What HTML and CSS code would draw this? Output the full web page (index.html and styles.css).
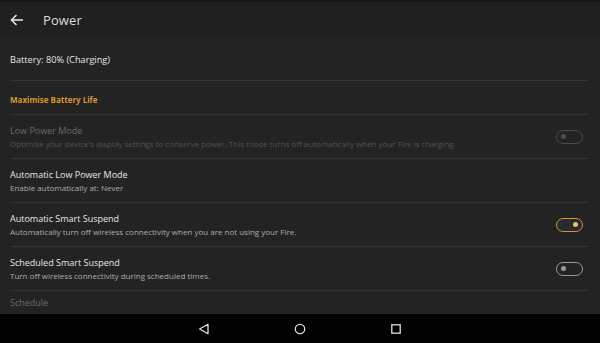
FILE: index.html
```html
<!DOCTYPE html>
<html>
<head>
<meta charset="utf-8">
<link rel="stylesheet" href="styles.css">
</head>
<body>
<div class="screen">
  <header class="appbar">
    <svg class="back" width="14" height="12" viewBox="0 0 14 12"><path d="M13 6H1.5M6.5 1L1.5 6l5 5" fill="none" stroke="#e8e8e8" stroke-width="1.5"/></svg>
    <span class="title">Power</span>
  </header>
  <main class="content">
    <div class="row battery"><span class="t">Battery: 80% (Charging)</span></div>
    <div class="row section"><span class="sec">Maximise Battery Life</span></div>
    <div class="row item disabled">
      <div class="texts"><div class="t">Low Power Mode</div><div class="s">Optimise your device's display settings to conserve power. This mode turns off automatically when your Fire is charging.</div></div>
      <span class="toggle off dim"><span class="knob"></span></span>
    </div>
    <div class="row item">
      <div class="texts"><div class="t">Automatic Low Power Mode</div><div class="s">Enable automatically at: Never</div></div>
    </div>
    <div class="row item">
      <div class="texts"><div class="t">Automatic Smart Suspend</div><div class="s">Automatically turn off wireless connectivity when you are not using your Fire.</div></div>
      <span class="toggle on"><span class="knob"></span></span>
    </div>
    <div class="row item">
      <div class="texts"><div class="t">Scheduled Smart Suspend</div><div class="s">Turn off wireless connectivity during scheduled times.</div></div>
      <span class="toggle off"><span class="knob"></span></span>
    </div>
    <div class="row last disabled"><span class="t">Schedule</span></div>
  </main>
  <nav class="navbar">
    <svg width="12" height="12" viewBox="0 0 12 12"><path d="M10 1.2V10.8L1.6 6Z" fill="none" stroke="#e0e0e0" stroke-width="1.3" stroke-linejoin="round"/></svg>
    <svg width="12" height="12" viewBox="0 0 12 12"><circle cx="6" cy="6" r="4.7" fill="none" stroke="#e0e0e0" stroke-width="1.3"/></svg>
    <svg width="12" height="12" viewBox="0 0 12 12"><rect x="1.8" y="1.8" width="8.4" height="8.4" fill="none" stroke="#e0e0e0" stroke-width="1.3"/></svg>
  </nav>
</div>
</body>
</html>
```
FILE: styles.css
```css
html, body { margin: 0; padding: 0; }
body { width: 600px; height: 343px; overflow: hidden; background: #232323; font-family: "Open Sans", "Noto Sans", sans-serif; }
.screen { display: flex; flex-direction: column; height: 343px; }
.appbar { height: 36px; border-top: 2px solid #161616; background: #202020; display: flex; align-items: center; padding-left: 10px; gap: 19px; }
.back { display: block; }
.title { color: #dcdcdc; font-size: 13px; letter-spacing: 0.1px; margin-top: -1px; }
.content { flex: 1; background: #232323; display: flex; flex-direction: column; padding: 0 12px 0 10px; }
.row { display: flex; align-items: center; border-bottom: 1px solid #343434; }
.battery { height: 42px; }
.battery .t { color: #e4e4e4; font-size: 9.2px; }
.section { height: 34px; padding-top: 3px; box-sizing: border-box; }
.sec { color: #d9962e; font-size: 8px; font-weight: 700; }
.item { height: 43px; justify-content: space-between; }
.texts { display: flex; flex-direction: column; gap: 1px; }
.item .t { color: #e6e6e6; font-size: 9px; }
.item .s { color: #ababab; font-size: 8px; }
.disabled .t { color: #6a6a6a; }
.disabled .s { color: #555; }
.last { border-bottom: none; flex: 1; }
.last .t { color: #6a6a6a; font-size: 9px; }
.toggle { width: 27px; height: 14px; border-radius: 7px; border: 1.5px solid #9a9a9a; margin-right: 5px; display: flex; align-items: center; padding: 0 4px; box-sizing: border-box; }
.toggle .knob { width: 5px; height: 5px; border-radius: 50%; background: #9a9a9a; }
.toggle.on { border-color: #d9922a; justify-content: flex-end; background: #262a33; }
.toggle.on .knob { background: #efc06a; }
.toggle.dim { border-color: #4d4d4d; }
.toggle.dim .knob { background: #4d4d4d; }
.navbar { height: 29px; background: #000; display: flex; justify-content: center; align-items: center; gap: 84px; }
.navbar svg { display: block; }
```
